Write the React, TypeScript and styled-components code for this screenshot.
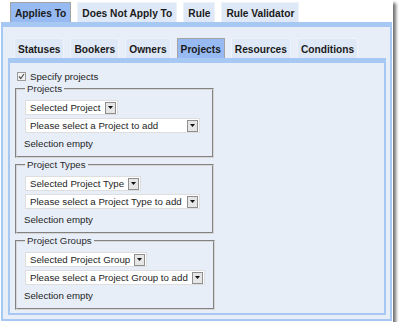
import styled, { createGlobalStyle } from 'styled-components';

const GlobalStyle = createGlobalStyle`
  body {
    margin: 0;
    background: #ffffff;
    font-family: 'Liberation Sans', Arial, sans-serif;
  }
`;

const outerTabs = ['Applies To', 'Does Not Apply To', 'Rule', 'Rule Validator'];
const innerTabs = ['Statuses', 'Bookers', 'Owners', 'Projects', 'Resources', 'Conditions'];

const groups = [
  { legend: 'Projects', selected: 'Selected Project', add: 'Please select a Project to add' },
  { legend: 'Project Types', selected: 'Selected Project Type', add: 'Please select a Project Type to add' },
  { legend: 'Project Groups', selected: 'Selected Project Group', add: 'Please select a Project Group to add' },
];

const DropSelect = ({ label, minWidth }: { label: string; minWidth?: number }) => (
  <SelectBox $minWidth={minWidth}>
    <SelectText>{label}</SelectText>
    <SelectButton>
      <svg width="5" height="3" viewBox="0 0 5 3">
        <path d="M0 0 H5 L2.5 3 Z" fill="#111" />
      </svg>
    </SelectButton>
  </SelectBox>
);

const App = () => {
  return (
    <>
      <GlobalStyle />
      <Frame>
        <TabRow $left={9}>
          {outerTabs.map((t, i) => (
            <Tab key={t} $active={i === 0} $padX={4}>
              {t}
            </Tab>
          ))}
        </TabRow>
        <Panel $pad="9px 4px 4px 5px">
          <TabRow $left={6}>
            {innerTabs.map((t) => (
              <Tab key={t} $active={t === 'Projects'} $padX={3}>
                {t}
              </Tab>
            ))}
          </TabRow>
          <Panel $pad="7px 3px 3px 5px">
            <CheckRow>
              <CheckBox>
                <svg width="7" height="7" viewBox="0 0 7 7">
                  <path d="M1 3.5 L2.8 5.5 L6 1" fill="none" stroke="#555" strokeWidth="1.2" />
                </svg>
              </CheckBox>
              Specify projects
            </CheckRow>
            {groups.map((g) => (
              <Group key={g.legend}>
                <Legend>{g.legend}</Legend>
                <DropSelect label={g.selected} />
                <DropSelect label={g.add} minWidth={175} />
                <EmptyNote>Selection empty</EmptyNote>
              </Group>
            ))}
          </Panel>
        </Panel>
      </Frame>
    </>
  );
};

export default App;

const Frame = styled.div`
  width: 393px;
  box-sizing: border-box;
  background: #ffffff;
  padding: 0 1px 1px 1px;
  display: flex;
  flex-direction: column;
  box-shadow: 3px 3px 3px rgba(0, 0, 0, 0.55);
`;

const TabRow = styled.div<{ $left: number }>`
  display: flex;
  align-items: flex-end;
  gap: 6px;
  padding: 2px 0 0 ${({ $left }) => $left}px;
`;

const Tab = styled.div<{ $active: boolean; $padX: number }>`
  height: 20px;
  box-sizing: border-box;
  display: flex;
  align-items: center;
  padding: 1px ${({ $padX }) => $padX}px 0;
  font-size: 10.2px;
  font-weight: bold;
  color: #1a1a1a;
  white-space: nowrap;
  background: ${({ $active }) => ($active ? '#98baf3' : '#dfe8f6')};
  border: 1px solid ${({ $active }) => ($active ? '#a3a3a3' : '#eef3fb')};
  border-bottom: none;
`;

const Panel = styled.div<{ $pad: string }>`
  display: flex;
  flex-direction: column;
  background: #e7eef8;
  border: 2px solid #a8c8f4;
  border-top-width: 5px;
  padding: ${({ $pad }) => $pad};
`;

const CheckRow = styled.div`
  display: flex;
  align-items: center;
  gap: 4px;
  height: 12px;
  padding-left: 2px;
  font-size: 9.7px;
  color: #1e1e1e;
`;

const CheckBox = styled.span`
  width: 9px;
  height: 9px;
  box-sizing: border-box;
  border: 1px solid #9c9c9c;
  background: #f2f2f2;
  display: flex;
  align-items: center;
  justify-content: center;
`;

const Group = styled.fieldset`
  width: 199px;
  box-sizing: border-box;
  margin: 1px 0 0 0;
  padding: 5px 8px 6px 8px;
  border: 2px groove #d6d6d6;
  display: flex;
  flex-direction: column;
  align-items: flex-start;
  gap: 3px;
`;

const Legend = styled.legend`
  padding: 0 2px;
  font-size: 9.7px;
  line-height: 12px;
  color: #2a2a2a;
`;

const SelectBox = styled.div<{ $minWidth?: number }>`
  display: flex;
  align-items: center;
  height: 15px;
  box-sizing: border-box;
  min-width: ${({ $minWidth }) => ($minWidth ? `${$minWidth}px` : 'auto')};
  border: 1px solid #dedede;
  background: #ffffff;
  padding-left: 4px;
  gap: 4px;
`;

const SelectText = styled.span`
  flex: 1;
  font-size: 9.7px;
  color: #1e1e1e;
  white-space: nowrap;
`;

const SelectButton = styled.span`
  width: 11px;
  height: 12px;
  box-sizing: border-box;
  margin-right: 1px;
  border: 1px solid #8e8e8e;
  background: #e6e6e6;
  display: flex;
  align-items: center;
  justify-content: center;
`;

const EmptyNote = styled.div`
  margin: 2px 0 0 -1px;
  font-size: 9.7px;
  line-height: 12px;
  color: #1e1e1e;
`;
